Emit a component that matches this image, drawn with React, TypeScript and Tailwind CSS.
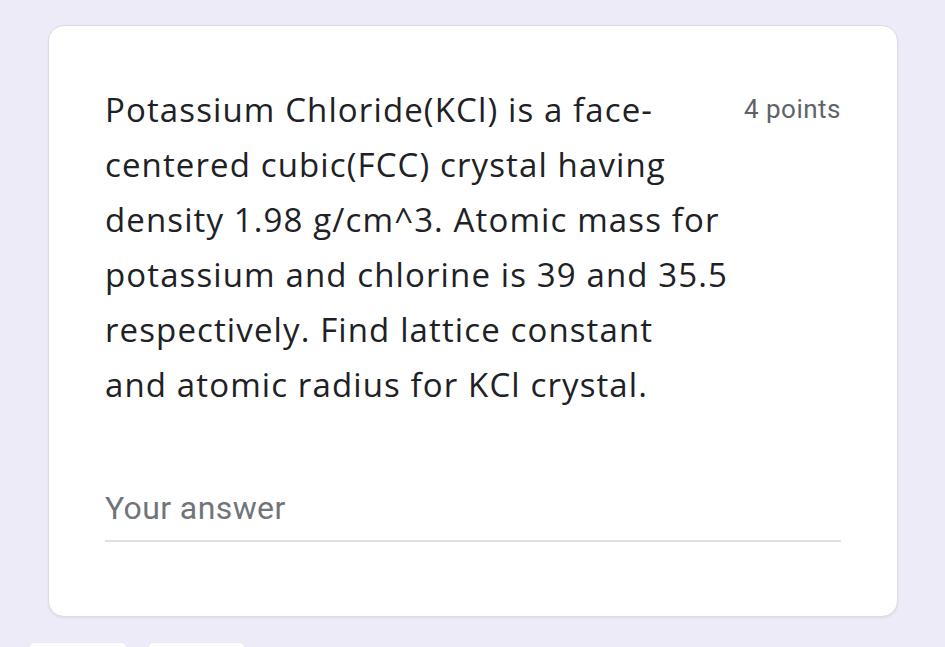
const questionLines = [
  "Potassium Chloride(KCl) is a face-",
  "centered cubic(FCC) crystal having",
  "density 1.98 g/cm^3. Atomic mass for",
  "potassium and chlorine is 39 and 35.5",
  "respectively. Find lattice constant",
  "and atomic radius for KCl crystal.",
];

export default function App() {
  return (
    <div className="h-[647px] overflow-hidden bg-[#eeebf8] pt-[25px]">
      {/* Question card */}
      <div className="mx-[48px] w-[850px] rounded-[16px] border border-[#dedbe6] bg-white px-[56px] pt-[56px] pb-[74px] shadow-[0_1px_2px_rgba(0,0,0,0.08)]">
        <div className="flex items-start justify-between">
          <div className="font-['Open_Sans',sans-serif] text-[33px] leading-[55px] tracking-[1.12px] text-[#202124]">
            {questionLines.map((line) => (
              <div key={line} className="whitespace-nowrap">
                {line}
              </div>
            ))}
          </div>
          <span className="pt-[12px] font-['Roboto',sans-serif] text-[26px] leading-[30px] tracking-[0.5px] text-[#5f6368]">
            4 points
          </span>
        </div>

        <div className="mt-[78px]">
          <div className="font-['Roboto',sans-serif] text-[32px] leading-[36px] tracking-[0.4px] text-[#70757a]">
            Your answer
          </div>
          <div className="mt-[14px] h-[2px] w-full bg-[#e0e0e0]" />
        </div>
      </div>

      {/* Buttons peeking at bottom */}
      <div className="mt-[26px] flex gap-[23px] pl-[30px]">
        <div className="h-[20px] w-[96px] rounded-[4px] bg-white shadow-[0_0_1px_rgba(0,0,0,0.15)]" />
        <div className="h-[20px] w-[95px] rounded-[4px] bg-white shadow-[0_0_1px_rgba(0,0,0,0.15)]" />
      </div>
    </div>
  );
}
